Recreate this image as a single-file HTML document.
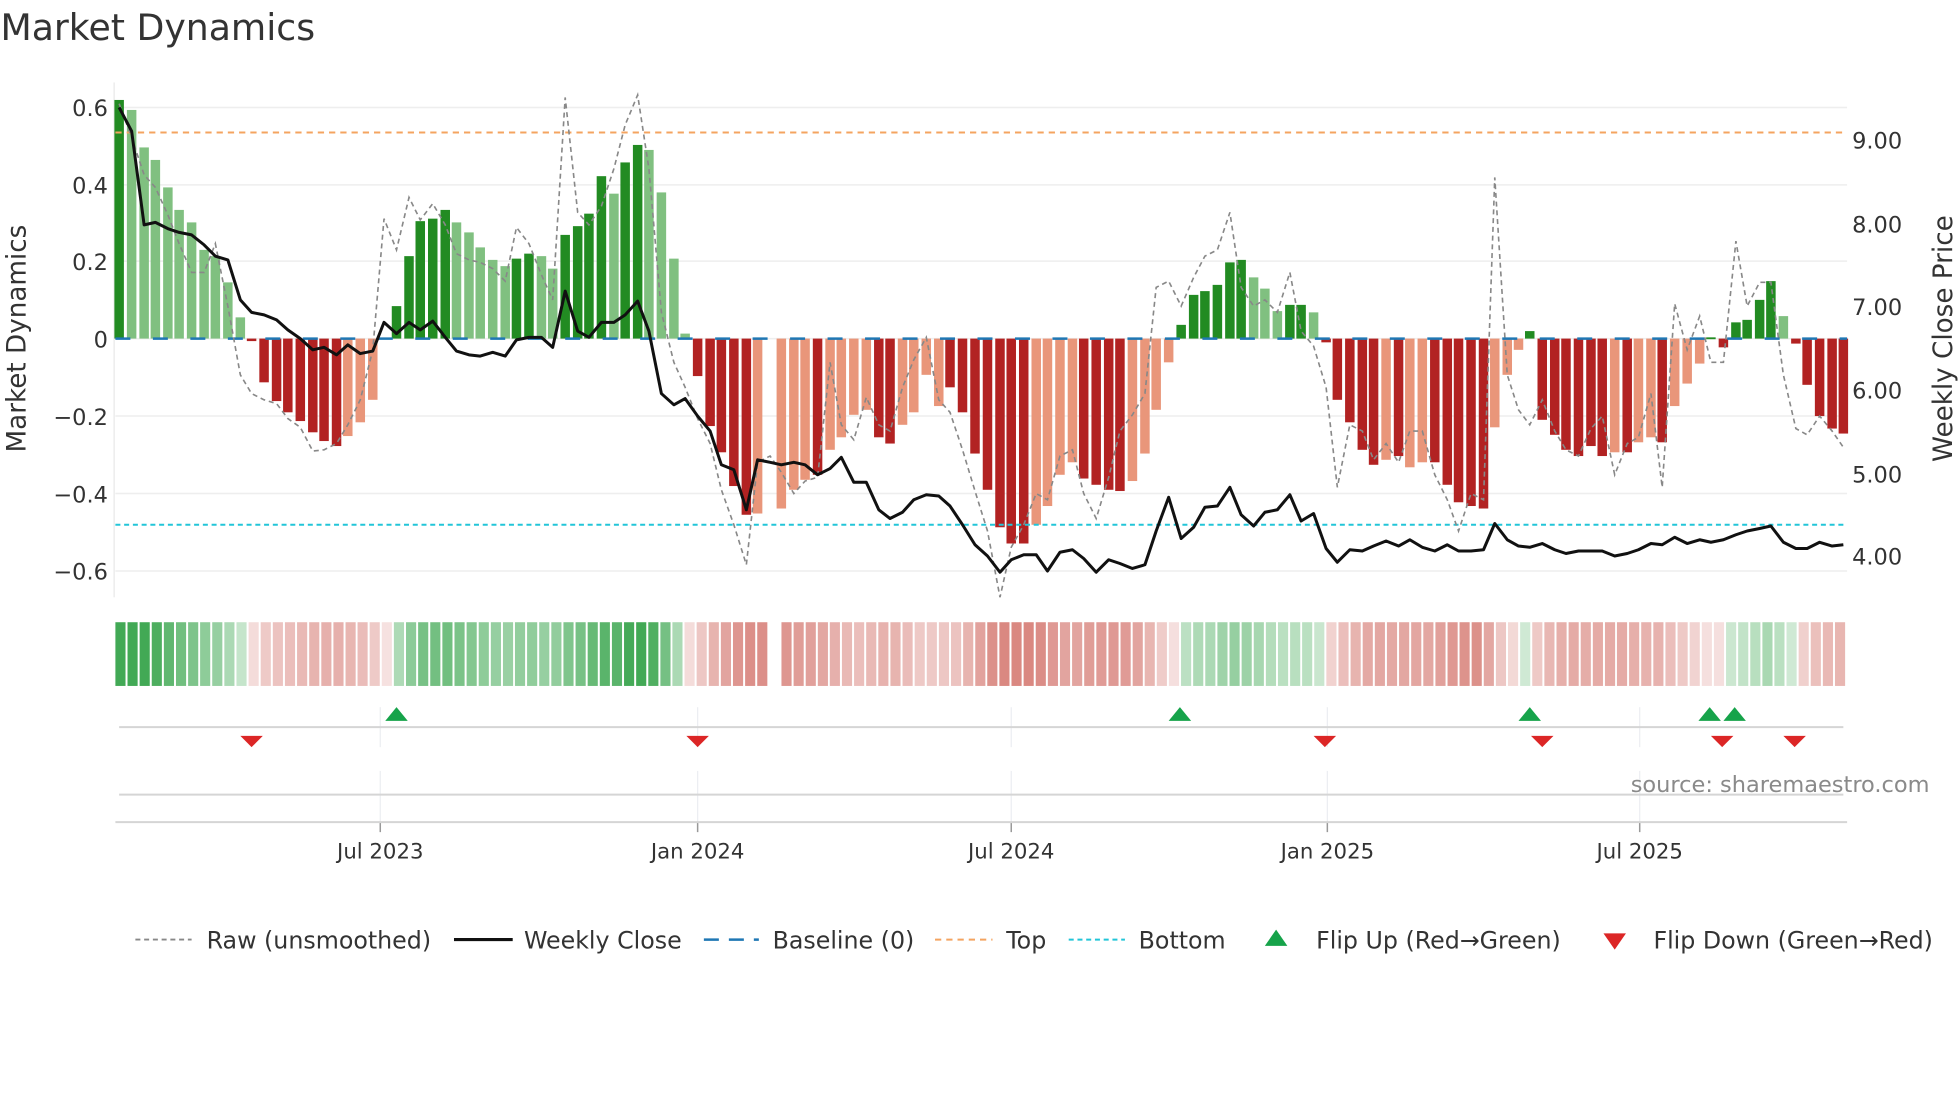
<!DOCTYPE html>
<html><head><meta charset="utf-8"><style>
html,body{margin:0;padding:0;background:#fff;}
svg{display:block;font-family:"DejaVu Sans","Liberation Sans",sans-serif;}
</style></head><body>
<svg id="s" width="1960" height="1102" viewBox="0 0 1568 882" xmlns="http://www.w3.org/2000/svg">
<rect width="1568" height="882" fill="#fff"/>
<text x="0" y="32" font-size="29" fill="#333">Market Dynamics</text>
<g id="g"></g>
</svg>
<script>
var G=document.getElementById('g'),H='';
function ln(x1,y1,x2,y2,c,w,d){H+='<line x1="'+x1+'" y1="'+y1+'" x2="'+x2+'" y2="'+y2+'" stroke="'+c+'" stroke-width="'+w+'"'+(d?' stroke-dasharray="'+d+'"':'')+'/>';}
function tx(x,y,t,s,c,a,extra){H+='<text x="'+x+'" y="'+y+'" font-size="'+s+'" fill="'+c+'" text-anchor="'+(a||'start')+'" '+(extra||'')+'>'+t+'</text>';}
[86,148,209,271,333,395,457].forEach(function(y){ln(92,y,1478,y,'#eeeeee',1.2);});
ln(91,66,91,478,'#e8e8e8',1);
var yl=[['0.6',86],['0.4',148],['0.2',209],['0',271],['\u22120.2',333],['\u22120.4',395],['\u22120.6',457]];
yl.forEach(function(a){tx(86,a[1]+7,a[0],18,'#333','end');});
[['9.00',112],['8.00',179],['7.00',245],['6.00',312],['5.00',379],['4.00',445]].forEach(function(a){tx(1482,a[1]+7,a[0],18,'#333');});
tx(20,271,'Market Dynamics',21,'#333','middle','transform="rotate(-90 20 271)"');
tx(1562,271,'Weekly Close Price',21,'#333','middle','transform="rotate(-90 1562 271)"');
var B=[[95,80,0],[105,88,1],[115,118,1],[124,128,1],[134,150,1],[143,168,1],[153,178,1],[163,200,1],[172,205,1],[182,226,1],[192,254,1],[201,273,2],[211,306,2],[221,321,2],[230,330,2],[240,337,2],[250,346,2],[259,353,2],[269,357,2],[278,349,3],[288,338,3],[298,320,3],[317,245,0],[327,205,0],[336,177,0],[346,175,0],[356,168,0],[365,178,1],[375,186,1],[384,198,1],[394,208,1],[404,213,1],[413,207,0],[423,203,0],[433,205,1],[442,215,1],[452,188,0],[462,181,0],[471,171,0],[481,141,0],[491,155,1],[500,130,0],[510,116,0],[519,120,1],[529,154,1],[539,207,1],[548,267,1],[558,301,2],[568,341,2],[577,362,2],[587,389,2],[597,412,2],[606,411,3],[625,407,3],[635,392,3],[644,384,3],[654,380,2],[664,360,3],[673,350,3],[683,332,3],[693,328,3],[703,350,2],[712,355,2],[722,340,3],[731,330,3],[741,300,3],[751,325,3],[760,310,2],[770,330,2],[780,363,2],[790,392,2],[800,422,2],[809,435,2],[819,435,2],[829,420,3],[838,405,3],[848,380,3],[858,370,3],[867,383,2],[877,388,2],[887,392,2],[896,393,2],[906,385,3],[916,363,3],[925,328,3],[935,290,3],[945,260,0],[955,236,0],[964,233,0],[974,228,0],[984,210,0],[993,208,0],[1003,222,1],[1012,231,1],[1022,249,1],[1032,244,0],[1041,244,0],[1051,250,1],[1061,274,2],[1070,320,2],[1080,338,2],[1090,360,2],[1099,372,2],[1109,368,3],[1119,365,2],[1128,374,3],[1138,370,3],[1148,370,2],[1158,388,2],[1167,402,2],[1177,405,2],[1187,407,2],[1196,342,3],[1206,300,3],[1215,280,3],[1224,265,0],[1234,336,2],[1244,348,2],[1253,360,2],[1263,365,2],[1273,357,2],[1282,365,2],[1292,362,3],[1302,362,2],[1311,354,3],[1321,350,3],[1330,354,2],[1340,325,3],[1350,307,3],[1360,291,3],[1369,270,0],[1379,278,2],[1389,258,0],[1398,256,0],[1408,240,0],[1417,225,0],[1427,253,1],[1437,275,2],[1446,308,2],[1456,333,2],[1466,343,2],[1475,347,2]];
var C=['#228b22','#80c080','#b22222','#e9967a'];
B.forEach(function(b){var y=Math.min(b[1],271),h=Math.max(Math.abs(b[1]-271),1.5);H+='<rect x="'+(b[0]-3.8)+'" y="'+y+'" width="7.6" height="'+h+'" fill="'+C[b[2]]+'"/>';});
ln(92,271,1478,271,'#1f77b4',2,'12 18');
ln(92,106,1478,106,'#f4a460',1.6,'5 4');
ln(92,420,1478,420,'#22c5d8',1.6,'4 3');
var R=[[95,83],[105,110],[115,140],[124,150],[134,172],[143,195],[153,218],[163,218],[172,195],[182,245],[192,300],[201,315],[211,320],[221,323],[230,335],[240,342],[250,361],[259,360],[269,355],[278,340],[288,320],[298,280],[307,175],[317,200],[327,158],[336,176],[346,163],[356,180],[365,203],[375,208],[384,210],[394,215],[404,225],[413,182],[423,195],[433,220],[442,240],[452,78],[462,170],[471,180],[481,165],[491,135],[500,100],[510,76],[519,135],[529,250],[539,290],[548,310],[558,335],[568,355],[577,392],[587,420],[597,452],[606,370],[616,365],[625,378],[635,395],[644,385],[654,382],[664,290],[673,340],[683,352],[693,318],[703,340],[712,345],[722,310],[731,288],[741,270],[751,320],[760,330],[770,360],[780,393],[790,425],[800,478],[809,438],[819,420],[829,395],[838,400],[848,365],[858,360],[867,395],[877,415],[887,382],[896,345],[906,332],[916,315],[925,230],[935,225],[945,245],[955,222],[964,205],[974,200],[984,170],[993,230],[1003,245],[1012,240],[1022,250],[1032,218],[1041,265],[1051,277],[1061,310],[1070,390],[1080,340],[1090,345],[1099,368],[1109,355],[1119,370],[1128,345],[1138,345],[1148,380],[1158,400],[1167,425],[1177,395],[1187,400],[1196,142],[1206,300],[1215,328],[1224,340],[1234,320],[1244,345],[1253,360],[1263,365],[1273,343],[1282,333],[1292,380],[1302,355],[1311,350],[1321,315],[1330,390],[1340,243],[1350,280],[1360,253],[1369,290],[1379,290],[1389,193],[1398,245],[1408,226],[1417,226],[1427,300],[1437,343],[1446,348],[1456,333],[1466,345],[1475,358]];
H+='<polyline fill="none" stroke="#888" stroke-width="1.3" stroke-dasharray="4 3" points="'+R.map(function(p){return p.join(',')}).join(' ')+'"/>';
var P=[[95,86],[105,105],[115,180],[124,178],[134,183],[143,186],[153,188],[163,196],[172,205],[182,208],[192,240],[201,250],[211,252],[221,256],[230,264],[240,271],[250,280],[259,278],[269,284],[278,276],[288,283],[298,281],[307,258],[317,267],[327,258],[336,264],[346,257],[356,270],[365,281],[375,284],[384,285],[394,282],[404,285],[413,272],[423,270],[433,270],[442,278],[452,233],[462,265],[471,270],[481,258],[491,258],[500,252],[510,241],[519,265],[529,315],[539,324],[548,319],[558,333],[568,345],[577,372],[587,376],[597,408],[606,368],[616,370],[625,372],[635,370],[644,372],[654,380],[664,375],[673,366],[683,386],[693,386],[703,408],[712,415],[722,410],[731,400],[741,396],[751,397],[760,405],[770,420],[780,436],[790,445],[800,458],[809,448],[819,444],[829,444],[838,457],[848,442],[858,440],[867,447],[877,458],[887,448],[896,451],[906,455],[916,452],[925,425],[935,398],[945,431],[955,422],[964,406],[974,405],[984,390],[993,412],[1003,421],[1012,410],[1022,408],[1032,396],[1041,417],[1051,411],[1061,439],[1070,450],[1080,440],[1090,441],[1099,437],[1109,433],[1119,437],[1128,432],[1138,438],[1148,441],[1158,436],[1167,441],[1177,441],[1187,440],[1196,419],[1206,432],[1215,437],[1224,438],[1234,435],[1244,440],[1253,443],[1263,441],[1273,441],[1282,441],[1292,445],[1302,443],[1311,440],[1321,435],[1330,436],[1340,430],[1350,435],[1360,432],[1369,434],[1379,432],[1389,428],[1398,425],[1408,423],[1417,421],[1427,434],[1437,439],[1446,439],[1456,434],[1466,437],[1475,436]];
H+='<polyline fill="none" stroke="#111" stroke-width="2.4" stroke-linejoin="round" points="'+P.map(function(p){return p.join(',')}).join(' ')+'"/>';
function val(x){for(var i=0;i<B.length-1;i++){if(x<=B[i+1][0]){var a=B[i],b=B[i+1],t=(x-a[0])/(b[0]-a[0]);return (271-(a[1]+(b[1]-a[1])*t))/308;}}return (271-B[B.length-1][1])/308;}
var n=143,w=(1478-92)/n;
for(var i=0;i<n;i++){var x=92+i*w,cx=x+w/2;if(cx>611&&cx<622)continue;var v=val(cx),a=Math.min(0.22+Math.abs(v)*1.4,0.9);
var col=v>=0?'rgba(46,160,67,'+a.toFixed(2)+')':'rgba(200,80,70,'+(a*0.75).toFixed(2)+')';
H+='<rect x="'+x.toFixed(1)+'" y="498" width="'+(w-1.6).toFixed(1)+'" height="51" fill="'+col+'"/>';}
[304,558,809,1062,1312].forEach(function(x){ln(x,566,x,598,'#eceef2',1);ln(x,617,x,658,'#eceef2',1);ln(x,658,x,666,'#999',1.2);});
ln(95,582,1475,582,'#d5d5d5',1.6);ln(95,636,1475,636,'#d5d5d5',1.6);ln(92,658,1478,658,'#d5d5d5',1.6);
[317,944,1224,1368,1388].forEach(function(x){H+='<polygon points="'+(x-9)+',577 '+(x+9)+',577 '+x+',566" fill="#16a34a"/>';});
[201,558,1060,1234,1378,1436].forEach(function(x){H+='<polygon points="'+(x-9)+',589 '+(x+9)+',589 '+x+',598" fill="#dc2626"/>';});
tx(1544,634,'source: sharemaestro.com',18,'#8a8a8a','end');
[['Jul 2023',304],['Jan 2024',558],['Jul 2024',809],['Jan 2025',1062],['Jul 2025',1312]].forEach(function(a){tx(a[1],687,a[0],17,'#333','middle');});
var ly=752;
ln(108,ly,153,ly,'#888',1.5,'4 3');tx(165,ly+7,'Raw (unsmoothed)',19,'#333');
ln(363,ly,410,ly,'#111',2.5);tx(419,ly+7,'Weekly Close',19,'#333');
ln(563,ly,607,ly,'#1f77b4',2,'12 8');tx(618,ly+7,'Baseline (0)',19,'#333');
ln(748,ly,794,ly,'#f4a460',1.6,'5 4');tx(805,ly+7,'Top',19,'#333');
ln(855,ly,900,ly,'#22c5d8',1.6,'4 3');tx(911,ly+7,'Bottom',19,'#333');
H+='<polygon points="1012,757 1030,757 1021,744" fill="#16a34a"/>';tx(1053,ly+7,'Flip Up (Red\u2192Green)',19,'#333');
H+='<polygon points="1283,747 1301,747 1292,760" fill="#dc2626"/>';tx(1323,ly+7,'Flip Down (Green\u2192Red)',19,'#333');
G.innerHTML=H;
</script>
</body></html>
